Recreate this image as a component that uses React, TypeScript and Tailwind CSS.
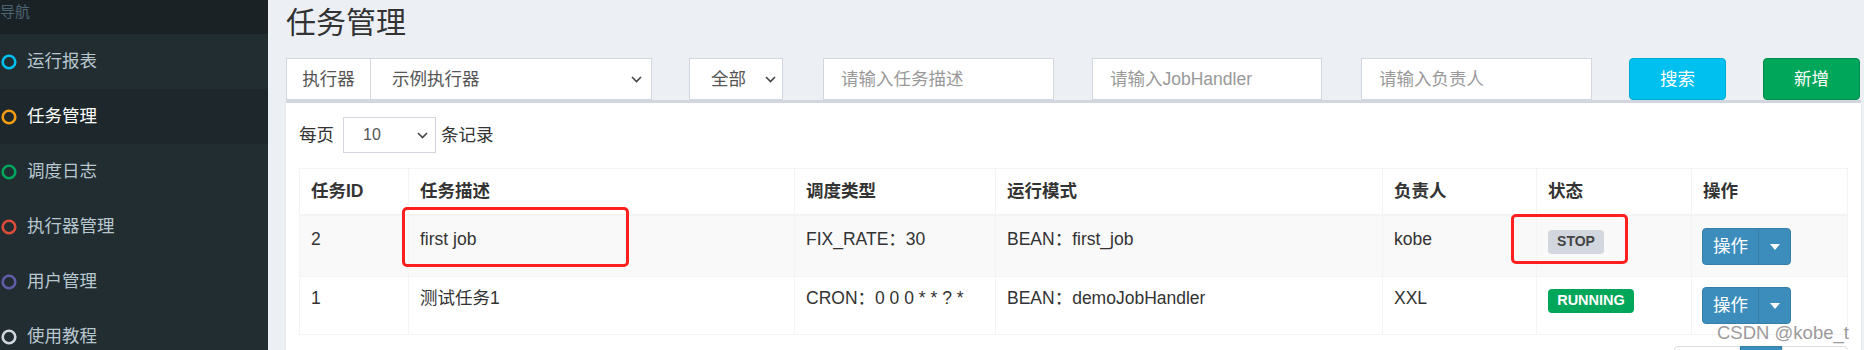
import React from "react";

const menu = [
  { text: "运行报表", color: "#00c0ef" },
  { text: "任务管理", color: "#f39c12", active: true },
  { text: "调度日志", color: "#00a65a" },
  { text: "执行器管理", color: "#dd4b39" },
  { text: "用户管理", color: "#605ca8" },
  { text: "使用教程", color: "#d2d6de" },
];

const cols = ["w-[109px]", "w-[386px]", "w-[201px]", "w-[387px]", "w-[154px]", "w-[155px]", "w-[155px]"];

function Ring({ color }: { color: string }) {
  return (
    <svg width="16" height="16" viewBox="0 0 16 16" className="shrink-0">
      <circle cx="8" cy="8" r="6.3" fill="none" stroke={color} strokeWidth="2.6" />
    </svg>
  );
}

function Chevron() {
  return (
    <svg width="11" height="7" viewBox="0 0 11 7" className="shrink-0">
      <path d="M1 1l4.5 4.5L10 1" fill="none" stroke="#444" strokeWidth="1.6" />
    </svg>
  );
}

function Sidebar() {
  return (
    <div className="w-[268px] shrink-0 bg-[#222d32] flex flex-col">
      <div className="h-[34px] shrink-0 bg-[#1a2226] text-[#4b646f] text-[15px] leading-[24px]">导航</div>
      {menu.map((m) => (
        <div
          key={m.text}
          className={`h-[55px] shrink-0 flex items-center gap-[10px] pl-[1px] text-[17.5px] ${
            m.active ? "bg-[#1e282c] text-white" : "text-[#b8c7ce]"
          }`}
        >
          <Ring color={m.color} />
          <span>{m.text}</span>
        </div>
      ))}
    </div>
  );
}

function ActionButton() {
  return (
    <div className="mt-[1px] flex h-[37px] w-[89px] rounded-[4px] bg-[#3c8dbc] border border-[#367fa9] text-white">
      <div className="w-[56px] flex items-center justify-center border-r border-[#367fa9]">操作</div>
      <div className="flex-1 flex items-center justify-center">
        <svg width="10" height="6" viewBox="0 0 10 6">
          <path d="M0 0h10L5 6z" fill="#fff" />
        </svg>
      </div>
    </div>
  );
}

function Row({
  cells,
  status,
  striped,
  pt,
  last,
}: {
  cells: string[];
  status: "STOP" | "RUNNING";
  striped?: boolean;
  pt: string;
  last?: boolean;
}) {
  return (
    <div className={`flex shrink-0 ${striped ? "bg-[#f9f9f9]" : "bg-white"} ${last ? "h-[57px]" : "h-[61px] border-b border-[#f4f4f4]"}`}>
      {cells.map((c, i) => (
        <div key={i} className={`${cols[i]} ${pt} px-[11px] border-r border-[#f4f4f4] leading-[25px]`}>
          {c}
        </div>
      ))}
      <div className={`${cols[5]} ${pt} px-[11px] border-r border-[#f4f4f4]`}>
        {status === "STOP" ? (
          <span className="mt-[2px] inline-flex h-[24px] w-[56px] items-center justify-center rounded-[4px] bg-[#d2d6de] text-[#444] text-[14px] font-bold">
            STOP
          </span>
        ) : (
          <span className="mt-[2px] inline-flex h-[24px] w-[86px] items-center justify-center rounded-[4px] bg-[#00a65a] text-white text-[14.5px] font-bold">
            RUNNING
          </span>
        )}
      </div>
      <div className={`${cols[6]} ${pt} px-[10px]`}>
        <ActionButton />
      </div>
    </div>
  );
}

export default function App() {
  const heads = ["任务ID", "任务描述", "调度类型", "运行模式", "负责人", "状态", "操作"];
  return (
    <div className="relative w-[1864px] h-[350px] overflow-hidden flex font-['Liberation_Sans','Noto_Sans_CJK_SC',sans-serif] text-[#333]">
      <Sidebar />
      <div className="flex-1 bg-[#ecf0f5] pl-[18px] pr-[4px] flex flex-col">
        <div className="h-[58px] shrink-0 pt-[6px] text-[30px] leading-[34px] text-[#333]">任务管理</div>

        <div className="h-[42px] shrink-0 flex text-[17.5px]">
          <div className="flex w-[366px] bg-white border border-[#d2d6de]">
            <div className="w-[84px] flex items-center justify-center border-r border-[#d2d6de] text-[#555]">执行器</div>
            <div className="flex-1 flex items-center justify-between pl-[21px] pr-[9px] text-[#555]">
              <span>示例执行器</span>
              <Chevron />
            </div>
          </div>
          <div className="ml-[37px] w-[94px] flex items-center justify-between pl-[21px] pr-[6px] bg-white border border-[#d2d6de] text-[#555]">
            <span>全部</span>
            <Chevron />
          </div>
          <div className="ml-[40px] w-[231px] flex items-center pl-[17px] bg-white border border-[#d2d6de] text-[#999]">请输入任务描述</div>
          <div className="ml-[38px] w-[230px] flex items-center pl-[17px] bg-white border border-[#d2d6de] text-[#999]">请输入JobHandler</div>
          <div className="ml-[39px] w-[231px] flex items-center pl-[17px] bg-white border border-[#d2d6de] text-[#999]">请输入负责人</div>
          <div className="ml-[37px] w-[97px] flex items-center justify-center rounded-[4px] bg-[#00c0ef] border border-[#00acd6] text-white">搜索</div>
          <div className="ml-[37px] w-[97px] flex items-center justify-center rounded-[4px] bg-[#00a65a] border border-[#008d4c] text-white">新增</div>
        </div>

        <div className="shrink-0 bg-white border-t-[3px] border-[#d2d6de] px-[13px] pt-[14px] pb-[20px] text-[17.5px] shadow-[0_1px_1px_rgba(0,0,0,0.1)]">
          <div className="h-[36px] flex items-center">
            <span>每页</span>
            <div className="ml-[9px] mr-[5px] w-[93px] h-[36px] flex items-center justify-between pl-[19px] pr-[7px] border border-[#d2d6de] text-[#555] text-[16px]">
              <span>10</span>
              <Chevron />
            </div>
            <span>条记录</span>
          </div>

          <div className="mt-[15px] w-[1549px] border border-[#f4f4f4]">
            <div className="flex h-[47px] border-b-2 border-[#f4f4f4] font-bold">
              {heads.map((h, i) => (
                <div key={h} className={`${cols[i]} px-[11px] flex items-center ${i < 6 ? "border-r border-[#f4f4f4]" : ""}`}>
                  {h}
                </div>
              ))}
            </div>
            <Row
              striped
              pt="pt-[11px]"
              status="STOP"
              cells={["2", "first job", "FIX_RATE：30", "BEAN：first_job", "kobe"]}
            />
            <Row
              last
              pt="pt-[9px]"
              status="RUNNING"
              cells={["1", "测试任务1", "CRON：0 0 0 * * ? *", "BEAN：demoJobHandler", "XXL"]}
            />
          </div>

          {/* pagination, only its top edge is in view */}
          <div className="mt-[11px] w-[1549px] flex justify-end">
            <div className="flex h-[40px]">
              <div className="w-[66px] border border-[#ddd] rounded-l-[4px]" />
              <div className="w-[42px] bg-[#3c8dbc] border border-[#367fa9]" />
              <div className="w-[66px] border border-[#ddd] rounded-r-[4px]" />
            </div>
          </div>
        </div>
      </div>

      <div className="absolute left-[402px] top-[207px] w-[227px] h-[60px] border-[3px] border-[#ff1f1f] rounded-[5px]" />
      <div className="absolute left-[1511px] top-[214px] w-[117px] h-[50px] border-[3px] border-[#ff1f1f] rounded-[5px]" />
      <div className="absolute left-[1717px] top-[319px] text-[18.5px] text-[#9b9b9b] [text-shadow:0_0_2px_#fff]">CSDN @kobe_t</div>
    </div>
  );
}
